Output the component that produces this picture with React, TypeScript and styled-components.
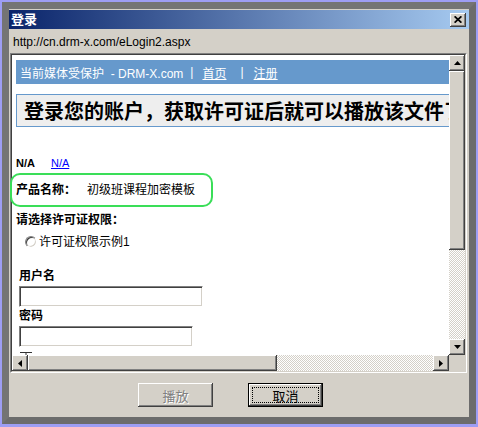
import styled, { createGlobalStyle } from 'styled-components';

const GlobalStyle = createGlobalStyle`
  html, body { margin: 0; padding: 0; background: #fff; }
  body {
    font-family: "Liberation Sans", "Noto Sans CJK SC", sans-serif;
    font-size: 12px;
    color: #000;
  }
  * { box-sizing: border-box; }
`;

const Glow = styled.div`
  position: relative;
  width: 478px;
  height: 427px;
  padding: 2px 2px 3px 2px;
  background: #9d9df4;
`;

const Frame = styled.div`
  height: 100%;
  border: 7px solid #6c6c6c;
  border-top-color: #747474;
  border-left-color: #747474;
`;

const Dialog = styled.div`
  height: 100%;
  display: flex;
  flex-direction: column;
  background: #d4d0c8;
  padding-top: 1px;
`;

const TitleBar = styled.div`
  height: 19px;
  display: flex;
  align-items: center;
  justify-content: space-between;
  padding: 0 3px 0 2px;
  background: linear-gradient(to right, #0a246a, #a6caf0);
`;

const Title = styled.span`
  color: #fff;
  font-weight: bold;
  font-size: 13px;
  line-height: 19px;
`;

const raised = `
  background: #d4d0c8;
  box-shadow: inset -1px -1px #404040, inset 1px 1px #ffffff,
    inset -2px -2px #808080, inset 2px 2px #d4d0c8;
`;

const CloseButton = styled.div`
  width: 16px;
  height: 14px;
  display: flex;
  align-items: center;
  justify-content: center;
  ${raised}
`;

const UrlBar = styled.div`
  height: 24px;
  display: flex;
  align-items: center;
  padding: 2px 0 0 4px;
  font-size: 12px;
`;

const Browser = styled.div`
  height: 320px;
  margin: 0 2px 0 1px;
  border: 1px solid;
  border-color: #808080 #ffffff #ffffff #808080;
`;

const BrowserInner = styled.div`
  height: 100%;
  display: grid;
  grid-template-columns: 1fr 16px;
  grid-template-rows: 1fr 16px;
  border: 1px solid;
  border-color: #404040 #d4d0c8 #d4d0c8 #404040;
  background: #fff;
`;

const Viewport = styled.div`
  overflow: hidden;
  min-width: 0;
`;

const Page = styled.div`
  width: 700px;
  padding: 5px 0 0 4px;
`;

const NavBar = styled.div`
  height: 24px;
  display: flex;
  align-items: center;
  padding-left: 4px;
  background: #6699cc;
  color: #fff;
  font-size: 12px;
  white-space: nowrap;
`;

const NavLink = styled.a`
  color: #fff;
  text-decoration: underline;
`;

const Sep = styled.span<{ $l: number; $r: number }>`
  margin: 0 ${p => p.$r}px 0 ${p => p.$l}px;
`;

const Heading = styled.div`
  margin-top: 10px;
  height: 33px;
  display: flex;
  align-items: center;
  padding-left: 7px;
  border: 1px solid #6699cc;
  background: #eeeeee;
  font-family: "Noto Sans CJK SC", sans-serif;
  font-weight: bold;
  font-size: 20px;
  white-space: nowrap;
`;

const Row = styled.div<{ $top: number; $indent?: number }>`
  margin-top: ${p => p.$top}px;
  margin-left: ${p => p.$indent || 0}px;
  height: 16px;
  display: flex;
  align-items: center;
  white-space: nowrap;
  line-height: 16px;
`;

const Bold = styled.span<{ $size?: number }>`
  font-weight: bold;
  font-size: ${p => p.$size || 12}px;
`;

const BlueLink = styled.a`
  margin-left: 16px;
  font-size: 11px;
  color: #0000ff;
  text-decoration: underline;
`;

const Value = styled.span`
  margin-left: 11px;
  font-size: 12px;
`;

const Radio = styled.span`
  width: 12px;
  height: 12px;
  margin-right: 2px;
  border-radius: 50%;
  background: #fff;
  border: 1px solid;
  border-color: #808080 #ffffff #ffffff #808080;
  box-shadow: inset 1px 1px #404040, inset -1px -1px #d4d0c8;
`;

const Form = styled.div`
  margin-left: 3px;
`;

const TextBox = styled.div<{ $w: number }>`
  margin-top: 2px;
  width: ${p => p.$w}px;
  height: 21px;
  background: #fff;
  border: 1px solid;
  border-color: #808080 #ffffff #ffffff #808080;
  box-shadow: inset 1px 1px #404040, inset -1px -1px #d4d0c8;
`;

const VScroll = styled.div`
  display: flex;
  flex-direction: column;
`;

const HScroll = styled.div`
  display: flex;
`;

const ArrowBtn = styled.div`
  width: 16px;
  height: 16px;
  flex: none;
  display: flex;
  align-items: center;
  justify-content: center;
  ${raised}
`;

const Thumb = styled.div<{ $len: number; $vertical?: boolean }>`
  flex: none;
  ${p => (p.$vertical ? `height: ${p.$len}px;` : `width: ${p.$len}px;`)}
  ${raised}
`;

const Track = styled.div`
  flex: 1;
  background-color: #d4d0c8;
  background-image: conic-gradient(#ffffff 25%, #d4d0c8 0 50%, #ffffff 0 75%, #d4d0c8 0);
  background-size: 2px 2px;
`;

const Corner = styled.div`
  background: #d4d0c8;
`;

const ButtonRow = styled.div`
  flex: 1;
  display: flex;
  align-items: flex-start;
  gap: 35px;
  padding: 10px 0 0 129px;
`;

const PushButton = styled.div<{ $default?: boolean; $disabled?: boolean }>`
  position: relative;
  width: 75px;
  height: 24px;
  display: flex;
  align-items: center;
  justify-content: center;
  font-size: 13px;
  color: ${p => (p.$disabled ? '#808080' : '#000')};
  text-shadow: ${p => (p.$disabled ? '1px 1px #ffffff' : 'none')};
  ${raised}
  ${p =>
    p.$default &&
    `
    border: 1px solid #000;
    box-shadow: inset -1px -1px #404040, inset 1px 1px #ffffff,
      inset -2px -2px #808080, inset 2px 2px #d4d0c8;
    &::after {
      content: '';
      position: absolute;
      inset: 3px;
      border: 1px dotted #000;
    }
  `}
`;

const Annotation = styled.div`
  position: absolute;
  left: 10px;
  top: 173px;
  width: 203px;
  height: 34px;
  border: 2px solid #3ade58;
  border-radius: 10px;
  pointer-events: none;
`;

const Cursor = styled.svg`
  position: absolute;
  left: 20px;
  top: 352px;
`;

type Dir = 'up' | 'down' | 'left' | 'right';
const tri: Record<Dir, string> = {
  up: '0,4 7,4 3.5,0',
  down: '0,0 7,0 3.5,4',
  left: '4,0 4,7 0,3.5',
  right: '0,0 0,7 4,3.5',
};

function Arrow({ dir }: { dir: Dir }) {
  const v = dir === 'up' || dir === 'down';
  return (
    <ArrowBtn>
      <svg width={v ? 7 : 4} height={v ? 4 : 7} viewBox={v ? '0 0 7 4' : '0 0 4 7'}>
        <polygon points={tri[dir]} fill="#000" />
      </svg>
    </ArrowBtn>
  );
}

export default function App() {
  return (
    <>
      <GlobalStyle />
      <Glow>
        <Frame>
          <Dialog>
            <TitleBar>
              <Title>登录</Title>
              <CloseButton>
                <svg width="8" height="7" viewBox="0 0 8 7">
                  <path d="M0.6 0.3 L7.4 6.7 M7.4 0.3 L0.6 6.7" stroke="#000" strokeWidth="1.7" />
                </svg>
              </CloseButton>
            </TitleBar>
            <UrlBar>http://cn.drm-x.com/eLogin2.aspx</UrlBar>
            <Browser>
              <BrowserInner>
                <Viewport>
                  <Page>
                    <NavBar>
                      <span>当前媒体受保护&nbsp; - DRM-X.com</span>
                      <Sep $l={7} $r={9}>|</Sep>
                      <NavLink>首页</NavLink>
                      <Sep $l={14} $r={10}>|</Sep>
                      <NavLink>注册</NavLink>
                    </NavBar>
                    <Heading>登录您的账户，获取许可证后就可以播放该文件了</Heading>
                    <Row $top={28}>
                      <Bold $size={11}>N/A</Bold>
                      <BlueLink>N/A</BlueLink>
                    </Row>
                    <Row $top={11}>
                      <Bold>产品名称：</Bold>
                      <Value>初级班课程加密模板</Value>
                    </Row>
                    <Row $top={14}>
                      <Bold>请选择许可证权限：</Bold>
                    </Row>
                    <Row $top={6} $indent={9}>
                      <Radio />
                      <span>许可证权限示例1</span>
                    </Row>
                    <Form>
                      <Row $top={18}>
                        <Bold>用户名</Bold>
                      </Row>
                      <TextBox $w={184} />
                      <Row $top={1}>
                        <Bold>密码</Bold>
                      </Row>
                      <TextBox $w={174} />
                    </Form>
                  </Page>
                </Viewport>
                <VScroll>
                  <Arrow dir="up" />
                  <Thumb $vertical $len={179} />
                  <Track />
                  <Arrow dir="down" />
                </VScroll>
                <HScroll>
                  <Arrow dir="left" />
                  <Thumb $len={249} />
                  <Track />
                  <Arrow dir="right" />
                </HScroll>
                <Corner />
              </BrowserInner>
            </Browser>
            <ButtonRow>
              <PushButton $disabled>播放</PushButton>
              <PushButton $default>取消</PushButton>
            </ButtonRow>
          </Dialog>
        </Frame>
        <Annotation />
        <Cursor width="13" height="3" viewBox="0 0 13 3">
          <path d="M0 0.5 H12 M6 0 V3" stroke="#333" strokeWidth="1" />
        </Cursor>
      </Glow>
    </>
  );
}
